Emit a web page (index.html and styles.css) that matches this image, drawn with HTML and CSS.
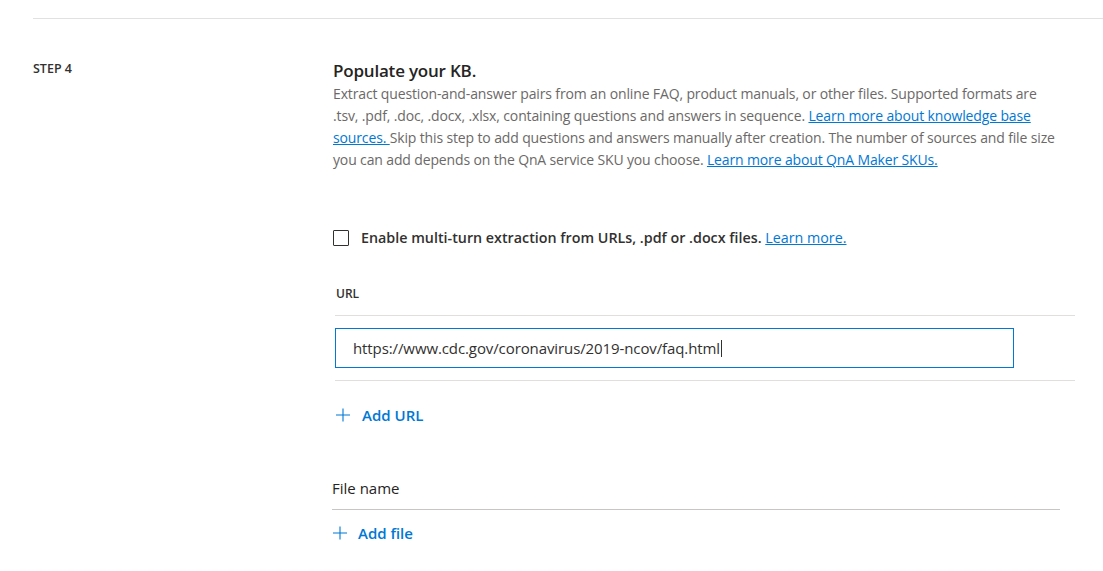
FILE: index.html
```html
<!DOCTYPE html>
<html lang="en">
<head>
<meta charset="utf-8">
<title>Populate your KB</title>
<link rel="stylesheet" href="styles.css">
</head>
<body>
<div class="page">
  <div class="divider"></div>
  <section class="step">
    <div class="step-label">STEP 4</div>
    <div class="step-body">
      <h2 class="step-title">Populate your KB.</h2>
      <p class="step-desc">Extract question-and-answer pairs from an online FAQ, product manuals, or other files. Supported formats are<br>.tsv, .pdf, .doc, .docx, .xlsx, containing questions and answers in sequence. <a href="#" class="link">Learn more about knowledge base<br>sources. </a>Skip this step to add questions and answers manually after creation. The number of sources and file size<br>you can add depends on the QnA service SKU you choose. <a href="#" class="link">Learn more about QnA Maker SKUs.</a></p>

      <label class="check-row">
        <span class="check-box"></span>
        <span class="check-text">Enable multi-turn extraction from URLs, .pdf or .docx files. <a href="#" class="link">Learn more.</a></span>
      </label>

      <div class="url-table">
        <div class="url-head">URL</div>
        <div class="url-row">
          <div class="text-input" role="textbox">https://www.cdc.gov/coronavirus/2019-ncov/faq.html<span class="caret"></span></div>
        </div>
      </div>

      <button class="add-btn add-url" type="button">
        <svg class="plus" width="16" height="16" viewBox="0 0 16 16" aria-hidden="true"><path d="M8 1.5V14.5M1 8H15" stroke="#0078d4" stroke-width="1.1" fill="none"/></svg>
        <span>Add URL</span>
      </button>

      <div class="file-table">
        <div class="file-head">File name</div>
      </div>

      <button class="add-btn add-file" type="button">
        <svg class="plus" width="16" height="16" viewBox="0 0 16 16" aria-hidden="true"><path d="M8 1.5V14.5M1 8H15" stroke="#0078d4" stroke-width="1.1" fill="none"/></svg>
        <span>Add file</span>
      </button>
    </div>
  </section>
</div>
</body>
</html>
```
FILE: styles.css
```css
* { box-sizing: border-box; }

body {
  margin: 0;
  background: #ffffff;
  font-family: "Open Sans", "Noto Sans", sans-serif;
  color: #323130;
}

.page {
  padding: 18px 0 0 33px;
}

.divider {
  border-top: 1px solid #e1e1e1;
}

.step {
  display: grid;
  grid-template-columns: 300px 1fr;
  padding-top: 40px;
}

.step-label {
  padding-top: 2px;
  font-size: 12.5px;
  line-height: 16px;
  font-weight: 600;
  color: #323130;
}

.step-title {
  margin: 0;
  font-size: 17px;
  line-height: 24px;
  letter-spacing: -0.2px;
  font-weight: 600;
  color: #252423;
}

.step-desc {
  margin: 0;
  font-size: 14px;
  line-height: 22px;
  letter-spacing: -0.14px;
  color: #6b6967;
  white-space: nowrap;
}

.link {
  color: #0078d4;
  text-decoration: underline;
}

.check-row {
  display: flex;
  align-items: center;
  margin-top: 57px;
  height: 20px;
}

.check-box {
  width: 16px;
  height: 16px;
  border: 1px solid #323130;
  border-radius: 1px;
  margin-right: 12px;
  flex: none;
}

.check-text {
  font-size: 14.3px;
  line-height: 20px;
  font-weight: 600;
  color: #323130;
}

.check-text .link {
  font-weight: 400;
}

.url-table {
  margin: 28px 0 0 2px;
  width: 740px;
}

.url-head {
  padding: 10px 1px 13px;
  font-size: 12px;
  line-height: 16px;
  font-weight: 600;
  border-bottom: 1px solid #e1dfdd;
}

.url-row {
  padding: 12px 0;
  border-bottom: 1px solid #e1dfdd;
}

.text-input {
  width: 679px;
  height: 40px;
  border: 1px solid #0078d4;
  padding: 2px 0 0 17px;
  font-size: 15px;
  line-height: 35px;
  color: #323130;
  letter-spacing: -0.1px;
}

.caret {
  display: inline-block;
  width: 1px;
  height: 17px;
  background: #323130;
  vertical-align: -3px;
  margin-left: 1px;
}

.add-btn {
  display: flex;
  align-items: center;
  padding: 0;
  border: 0;
  background: none;
  font-family: inherit;
  font-size: 15px;
  line-height: 20px;
  font-weight: 600;
  color: #0078d4;
  cursor: pointer;
  height: 20px;
}

.plus {
  flex: none;
}

.add-url {
  margin: 24px 0 0 2px;
  gap: 11px;
}

.file-table {
  margin: 53px 0 0 -1px;
  width: 728px;
}

.file-head {
  padding-bottom: 11px;
  font-size: 15px;
  line-height: 20px;
  font-weight: 500;
  color: #252423;
  border-bottom: 1px solid #c8c6c4;
}

.add-file {
  margin: 13px 0 0 -1px;
  gap: 10px;
}
```
